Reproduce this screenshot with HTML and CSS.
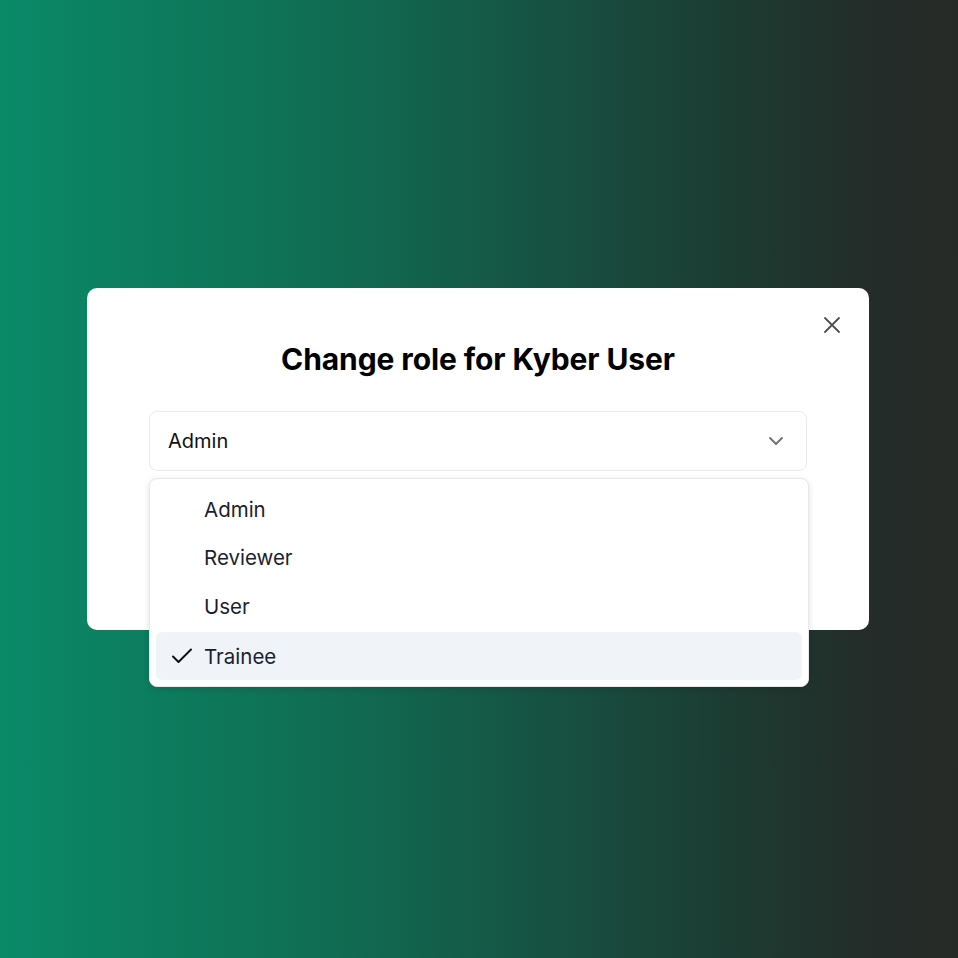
FILE: index.html
```html
<!DOCTYPE html>
<html>
<head>
<meta charset="utf-8">
<link rel="stylesheet" href="styles.css">
</head>
<body>
<div class="stage">
  <div class="modal">
    <button class="close" aria-label="Close">
      <svg width="18" height="18" viewBox="0 0 18 18" fill="none" stroke="#4b4f55" stroke-width="1.8" stroke-linecap="round"><path d="M2 2L16 16M16 2L2 16"/></svg>
    </button>
    <h1 class="title">Change role for Kyber User</h1>
    <div class="field">
      <div class="select">
        <span class="select-value">Admin</span>
        <svg class="chev" width="16" height="10" viewBox="0 0 16 10" fill="none" stroke="#6b6f75" stroke-width="1.8" stroke-linecap="round" stroke-linejoin="round"><path d="M2 2L8 8L14 2"/></svg>
      </div>
      <ul class="menu">
        <li class="option">Admin</li>
        <li class="option">Reviewer</li>
        <li class="option">User</li>
        <li class="option selected">
          <svg class="check" width="22" height="18" viewBox="0 0 22 18" fill="none" stroke="#111" stroke-width="2" stroke-linecap="round" stroke-linejoin="round"><path d="M2 9.5L7.5 15L20 2.5"/></svg>
          Trainee
        </li>
      </ul>
    </div>
  </div>
</div>
</body>
</html>
```
FILE: styles.css
```css
* { box-sizing: border-box; }
html, body { margin: 0; padding: 0; }
body {
  width: 958px;
  height: 958px;
  font-family: Inter, "Noto Sans", sans-serif;
  background: linear-gradient(90deg, #0a8a68 0%, #106c52 35%, #165444 55%, #1c3d33 75%, #232d29 90%, #262a27 100%);
}
.stage {
  width: 958px;
  height: 958px;
  padding-top: 288px;
  padding-left: 87px;
}
.modal {
  position: relative;
  width: 782px;
  height: 342px;
  background: #fff;
  border-radius: 10px;
  padding: 42px 62px 0 62px;
}
.close {
  position: absolute;
  top: 28px;
  right: 28px;
  width: 18px;
  height: 18px;
  padding: 0;
  border: 0;
  background: none;
  display: flex;
}
.title {
  margin: 0;
  text-align: center;
  font-size: 30px;
  font-weight: 700;
  line-height: 58px;
  color: #000;
  letter-spacing: -0.1px;
}
.field {
  position: relative;
  margin-top: 23px;
}
.select {
  height: 60px;
  border: 1px solid #e9ebf0;
  border-radius: 8px;
  display: flex;
  align-items: center;
  justify-content: space-between;
  padding: 0 22px 0 18px;
}
.select-value {
  font-size: 20px;
  color: #111;
}
.menu {
  position: absolute;
  left: 0;
  top: 67px;
  width: 660px;
  margin: 0;
  padding: 6px;
  list-style: none;
  background: #fff;
  border: 1px solid #e6e8ec;
  border-radius: 8px;
  box-shadow: 0 2px 6px rgba(0,0,0,0.12);
}
.option {
  position: relative;
  height: 49px;
  display: flex;
  align-items: center;
  padding-left: 48px;
  font-size: 20.5px;
  color: #1a1f2e;
  border-radius: 6px;
}
.option:first-child { height: 48px; }
.option.selected {
  background: #f0f3f8;
  height: 48px;
  margin-top: 1px;
}
.check {
  position: absolute;
  left: 15px;
  top: 15px;
}
```
